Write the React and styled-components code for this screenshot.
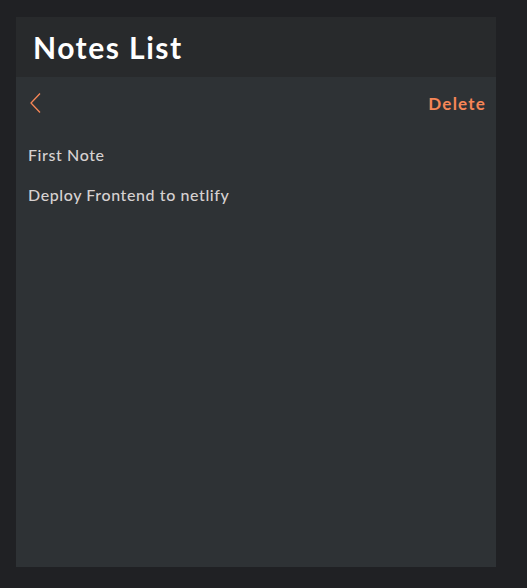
import React from 'react'
import styled, { createGlobalStyle } from 'styled-components'

const GlobalStyle = createGlobalStyle`
  html, body {
    margin: 0;
    padding: 0;
    background: #202124;
    font-family: Lato, "Noto Sans", sans-serif;
  }
`

const Page = styled.div`
  padding: 17px 31px 21px 16px;
`

const Panel = styled.div`
  width: 480px;
  height: 550px;
  background: #2e3235;
  display: flex;
  flex-direction: column;
`

const Header = styled.header`
  height: 60px;
  background: #282a2c;
  display: flex;
  align-items: center;
  padding: 0 17px;
  box-sizing: border-box;
`

const Title = styled.h1`
  margin: 0;
  color: #fff;
  font-size: 30px;
  font-weight: 700;
  letter-spacing: 1.5px;
`

const Toolbar = styled.div`
  display: flex;
  align-items: center;
  justify-content: space-between;
  height: 52px;
  padding: 0 10px 0 12px;
`

const BackButton = styled.button`
  background: none;
  border: none;
  padding: 0;
  display: flex;
  cursor: pointer;
`

const DeleteButton = styled.button`
  background: none;
  border: none;
  padding: 0;
  color: #f68657;
  font-family: inherit;
  font-size: 17px;
  font-weight: 700;
  letter-spacing: 1.2px;
  cursor: pointer;
`

const List = styled.ul`
  list-style: none;
  margin: 0;
  padding: 16px 12px 0;
  display: flex;
  flex-direction: column;
  gap: 20px;
`

const Item = styled.li`
  color: #d6d1d1;
  font-size: 16px;
  font-weight: 500;
  line-height: 20px;
  letter-spacing: 0.6px;
`

const notes = ['First Note', 'Deploy Frontend to netlify']

export default function App() {
  return (
    <>
      <GlobalStyle />
      <Page>
        <Panel>
          <Header>
            <Title>Notes List</Title>
          </Header>
          <Toolbar>
            <BackButton>
              <svg width="14" height="22" viewBox="0 0 14 22" fill="none">
                <path d="M12 1.5 L3 11 L12 20.5" stroke="#f68657" strokeWidth="1.3" />
              </svg>
            </BackButton>
            <DeleteButton>Delete</DeleteButton>
          </Toolbar>
          <List>
            {notes.map((n) => <Item key={n}>{n}</Item>)}
          </List>
        </Panel>
      </Page>
    </>
  )
}
